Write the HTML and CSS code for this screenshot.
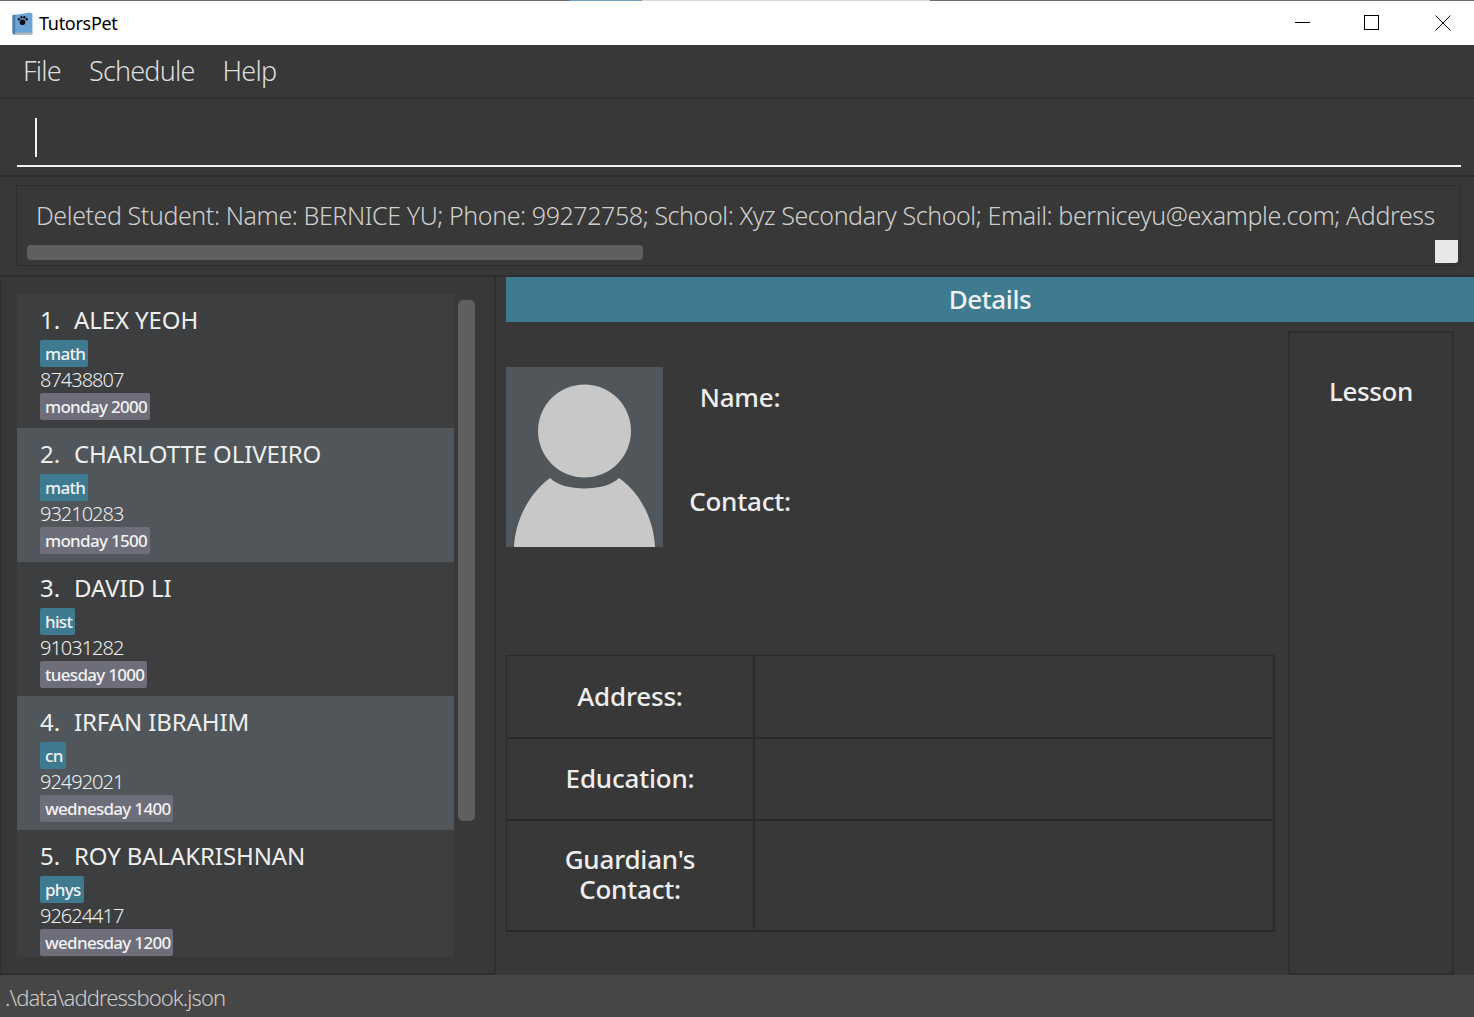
FILE: index.html
```html
<!DOCTYPE html>
<html lang="en">
<head>
  <meta charset="UTF-8" />
  <title>TutorsPet</title>
  <link rel="stylesheet" href="styles.css">
</head>
<body>
  <div class="topline"><span class="topline-blue"></span><span class="topline-light"></span></div>
  <div class="titlebar">
    <svg class="app-icon" viewBox="0 0 20 22">
      <path d="M0.5 3L17.5 0.5L19.5 2V21.5H1.5L0.5 20.5Z" fill="#6aa3d6"/>
      <path d="M0.5 3L3 2.5V21.5H1.5L0.5 20.5Z" fill="#4d7ea8"/>
      <path d="M3 19.5H19.5V21.5H3Z" fill="#a9b4bf"/>
      <circle cx="10" cy="9.8" r="2.7" fill="#111"/>
      <circle cx="6.6" cy="7" r="1.2" fill="#111"/>
      <circle cx="9" cy="5" r="1.2" fill="#111"/>
      <circle cx="11.8" cy="5" r="1.2" fill="#111"/>
      <circle cx="14" cy="7" r="1.2" fill="#111"/>
    </svg>
    <span class="app-name">TutorsPet</span>
    <div class="window-btns">
      <svg viewBox="0 0 16 16"><path d="M0 7.5H15" stroke="#000" fill="none"/></svg>
      <svg viewBox="0 0 16 16"><rect x="0.5" y="0.5" width="14" height="14" stroke="#000" fill="none"/></svg>
      <svg class="btn-close" viewBox="0 0 16 16"><path d="M0.5 0.5L15.5 15.5M15.5 0.5L0.5 15.5" stroke="#000" fill="none"/></svg>
    </div>
  </div>

  <div class="menubar">
    <span>File</span>
    <span>Schedule</span>
    <span>Help</span>
  </div>

  <div class="commandbox">
    <div class="command-input"><span class="caret"></span></div>
  </div>

  <div class="resultbox">
    <div class="result-inner">
      <div class="result-text">Deleted Student: Name: BERNICE YU; Phone: 99272758; School: Xyz Secondary School; Email: berniceyu@example.com; Address</div>
      <div class="hscroll">
        <div class="hscroll-thumb"></div>
        <div class="scroll-corner"></div>
      </div>
    </div>
  </div>

  <div class="main">
    <div class="listpanel">
      <div class="list">
        <div class="card">
          <div class="card-name"><span class="card-num">1.</span>ALEX YEOH</div>
          <div class="tags"><span class="tag">math</span></div>
          <div class="phone">87438807</div>
          <div class="tags"><span class="tag tag-time">monday 2000</span></div>
        </div>
        <div class="card card-alt">
          <div class="card-name"><span class="card-num">2.</span>CHARLOTTE OLIVEIRO</div>
          <div class="tags"><span class="tag">math</span></div>
          <div class="phone">93210283</div>
          <div class="tags"><span class="tag tag-time">monday 1500</span></div>
        </div>
        <div class="card">
          <div class="card-name"><span class="card-num">3.</span>DAVID LI</div>
          <div class="tags"><span class="tag">hist</span></div>
          <div class="phone">91031282</div>
          <div class="tags"><span class="tag tag-time">tuesday 1000</span></div>
        </div>
        <div class="card card-alt">
          <div class="card-name"><span class="card-num">4.</span>IRFAN IBRAHIM</div>
          <div class="tags"><span class="tag">cn</span></div>
          <div class="phone">92492021</div>
          <div class="tags"><span class="tag tag-time">wednesday 1400</span></div>
        </div>
        <div class="card">
          <div class="card-name"><span class="card-num">5.</span>ROY BALAKRISHNAN</div>
          <div class="tags"><span class="tag">phys</span></div>
          <div class="phone">92624417</div>
          <div class="tags"><span class="tag tag-time">wednesday 1200</span></div>
        </div>
      </div>
      <div class="vscroll"><div class="vscroll-thumb"></div></div>
    </div>

    <div class="details">
      <div class="details-head">Details</div>
      <div class="details-body">
        <div class="details-left">
          <div class="profile">
            <svg class="avatar" viewBox="0 0 157 180">
              <rect width="157" height="180" fill="#50565a"/>
              <circle cx="78.5" cy="64" r="46.5" fill="#c8c8c8"/>
              <path d="M8 180C9 155 22 127 44 111C58 125 99 125 113 111C136 127 148 155 149 180Z" fill="#c8c8c8"/>
            </svg>
            <div class="profile-labels">
              <div class="label">Name:</div>
              <div class="label">Contact:</div>
            </div>
          </div>
          <div class="infotable">
            <div class="info-row row-address">
              <div class="info-key">Address:</div>
              <div class="info-val"></div>
            </div>
            <div class="info-row row-education">
              <div class="info-key">Education:</div>
              <div class="info-val"></div>
            </div>
            <div class="info-row row-guardian">
              <div class="info-key">Guardian's<br>Contact:</div>
              <div class="info-val"></div>
            </div>
          </div>
        </div>
        <div class="lesson">Lesson</div>
      </div>
    </div>
  </div>

  <div class="statusbar">.\data\addressbook.json</div>
</body>
</html>
```

FILE: styles.css
```css
* {
  box-sizing: border-box;
}

html, body {
  margin: 0;
  height: 100%;
}

body {
  width: 1474px;
  height: 1017px;
  overflow: hidden;
  display: flex;
  flex-direction: column;
  background: #383838;
  font-family: "Noto Sans", "Open Sans", sans-serif;
  color: #eee;
}

body > div {
  flex-shrink: 0;
}

.topline {
  height: 1px;
  background: #6e6e6e;
  display: flex;
  padding-left: 570px;
}

.topline-blue {
  width: 72px;
  background: #6f9fc0;
}

.topline-light {
  width: 288px;
  background: #d8d8d8;
}

.titlebar {
  height: 44px;
  background: #fff;
  display: flex;
  align-items: center;
  padding-left: 12px;
  color: #000;
}

.app-icon {
  width: 21px;
  height: 23px;
  margin-right: 6px;
}

.app-name {
  font-size: 18px;
  letter-spacing: -0.3px;
}

.window-btns {
  margin-left: auto;
  display: flex;
  gap: 53px;
  padding-right: 23px;
  align-items: center;
}

.window-btns svg {
  width: 16px;
  height: 16px;
}

.btn-close {
  margin-left: 2px;
}

.menubar {
  height: 54px;
  display: flex;
  align-items: center;
  gap: 28px;
  padding-left: 23px;
  padding-bottom: 3px;
  font-size: 27px;
  font-weight: 300;
  letter-spacing: -0.8px;
  color: #ddd;
  border-bottom: 1px solid #2e2e2e;
}

.commandbox {
  height: 78px;
  padding: 0 13px 0 17px;
  border-bottom: 2px solid #2e2e2e;
}

.command-input {
  height: 68px;
  border-bottom: 2px solid #f2f2f2;
  padding: 19px 0 0 18px;
}

.caret {
  display: block;
  width: 2px;
  height: 39px;
  background: #f2f2f2;
}

.resultbox {
  height: 100px;
  padding: 8px 13px 11px 16px;
  border-bottom: 2px solid #2e2e2e;
}

.result-inner {
  height: 81px;
  border: 1px solid #2e2e2e;
  display: flex;
  flex-direction: column;
  overflow: hidden;
}

.result-text {
  padding: 11px 0 0 19px;
  height: 54px;
  font-size: 25px;
  line-height: 36px;
  font-weight: 300;
  letter-spacing: -0.42px;
  white-space: nowrap;
  color: #cfcfcf;
}

.hscroll {
  display: flex;
  justify-content: space-between;
  padding: 5px 2px 0 10px;
}

.hscroll-thumb {
  width: 616px;
  height: 15px;
  background: #5f5f5f;
  border-radius: 4px;
}

.scroll-corner {
  width: 23px;
  height: 23px;
  margin-top: -5px;
  background: #e8e8e8;
  border-radius: 0 0 3px 0;
}

.main {
  height: 698px;
  display: flex;
}

.listpanel {
  width: 496px;
  flex-shrink: 0;
  display: flex;
  padding: 17px 0 16px 16px;
  border-left: 1px solid #2e2e2e;
  border-right: 2px solid #2e2e2e;
  border-bottom: 2px solid #2e2e2e;
}

.list {
  width: 437px;
  height: 663px;
  overflow: hidden;
  background: #3c3e3f;
}

.card {
  height: 134px;
  padding: 8px 0 0 23px;
}

.card-alt {
  background: #50565a;
}

.card-name {
  font-size: 24px;
  line-height: 36px;
  letter-spacing: -0.1px;
  color: #eee;
  white-space: nowrap;
}

.card-num {
  margin-right: 14px;
}

.tags {
  display: flex;
  height: 27px;
}

.tags:nth-child(2) {
  margin-top: 2px;
}

.tag {
  height: 27px;
  padding: 0 3px 0 5px;
  border-radius: 2px;
  background: #3e7b91;
  font-size: 17px;
  line-height: 27px;
  font-weight: 500;
  letter-spacing: -0.7px;
  color: #f2f2f2;
}

.tag-time {
  background: #6e6e7a;
}

.phone {
  height: 26px;
  font-size: 20px;
  line-height: 26px;
  font-weight: 300;
  letter-spacing: -1px;
  color: #eee;
}

.vscroll {
  padding: 6px 0 0 4px;
}

.vscroll-thumb {
  width: 17px;
  height: 521px;
  background: #5f5f5f;
  border-radius: 5px;
}

.details {
  flex: 1;
  padding-left: 10px;
  display: flex;
  flex-direction: column;
}

.details-head {
  height: 45px;
  background: #3e7b91;
  text-align: center;
  font-size: 26px;
  line-height: 45px;
  font-weight: 500;
  letter-spacing: -0.4px;
  color: #f2f2f2;
}

.details-body {
  flex: 1;
  display: flex;
  padding-top: 9px;
}

.details-left {
  width: 769px;
  padding-top: 36px;
}

.profile {
  display: flex;
  height: 288px;
}

.avatar {
  width: 157px;
  height: 180px;
}

.profile-labels {
  width: 154px;
  display: flex;
  flex-direction: column;
  gap: 68px;
  padding-top: 12px;
}

.label, .info-key, .lesson {
  font-size: 26px;
  line-height: 36px;
  font-weight: 500;
  letter-spacing: -0.2px;
  color: #eee;
  text-align: center;
}

.infotable {
  border: 1px solid #2a2a2a;
  border-bottom-width: 2px;
  border-right-width: 2px;
  height: 277px;
}

.info-row {
  display: flex;
  border-bottom: 2px solid #2a2a2a;
}

.info-row:last-child {
  border-bottom: 0;
}

.row-address {
  height: 83px;
}

.row-education {
  height: 82px;
}

.row-guardian {
  height: 108px;
}

.info-key {
  width: 248px;
  display: flex;
  align-items: center;
  justify-content: center;
  line-height: 30px;
  padding-bottom: 2px;
  border-right: 2px solid #2a2a2a;
}

.info-val {
  flex: 1;
}

.lesson {
  width: 166px;
  height: 644px;
  margin-left: 13px;
  padding-top: 40px;
  border: 2px solid #2e2e2e;
  letter-spacing: -0.4px;
}

.statusbar {
  height: 42px;
  background: #464646;
  padding-left: 5px;
  font-size: 22px;
  line-height: 44px;
  font-weight: 300;
  letter-spacing: -0.9px;
  color: #ccc;
}
```
